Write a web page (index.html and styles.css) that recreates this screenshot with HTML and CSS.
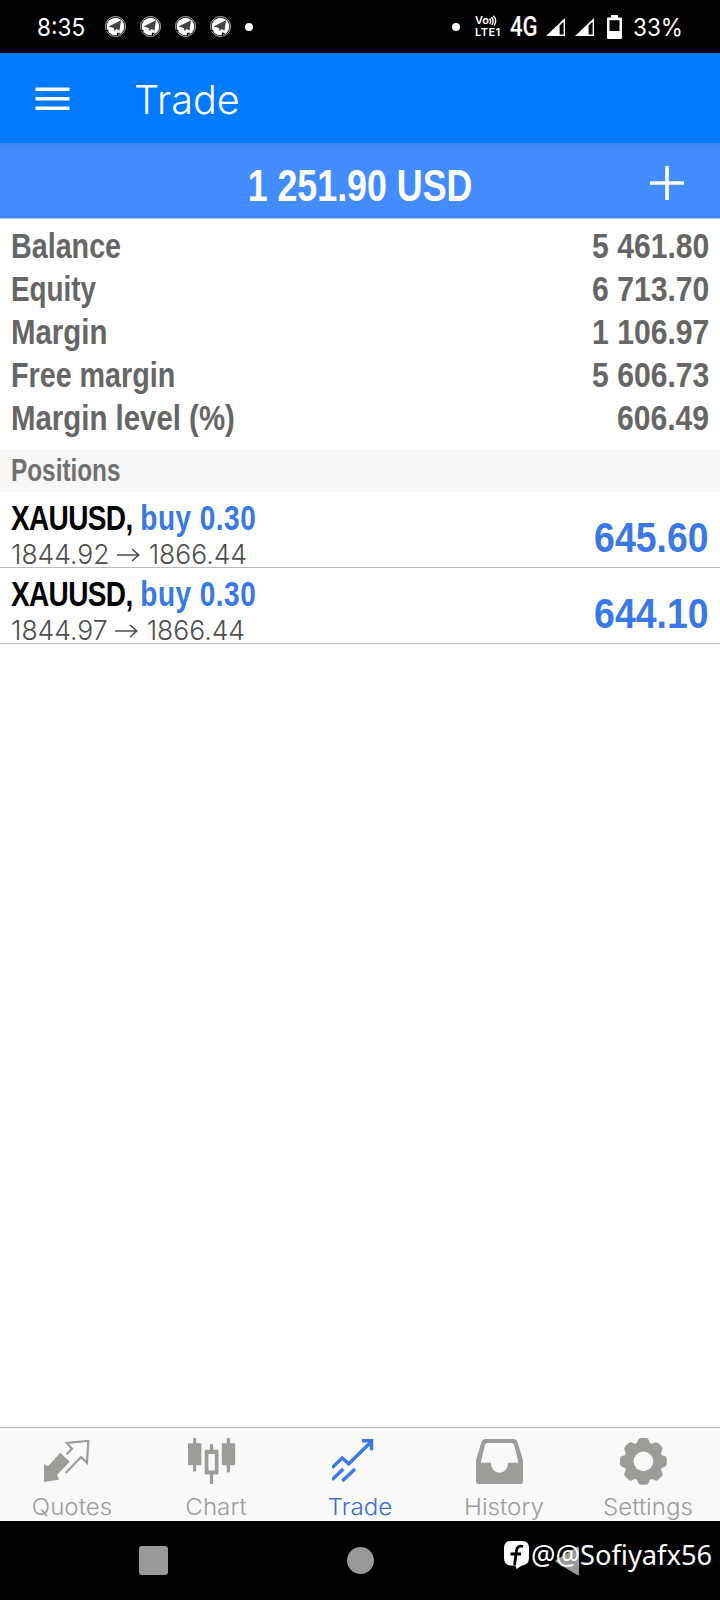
FILE: index.html
```html
<!DOCTYPE html>
<html lang="en">
  <head>
    <meta charset="UTF-8" />
    <meta name="viewport" content="width=device-width, initial-scale=1.0" />
    <title>Trade</title>
    <link rel="stylesheet" href="styles.css">
  </head>
  <body>
    <svg width="0" height="0" class="defs">
      <symbol id="telegram" viewBox="0 0 21 21">
        <circle cx="10.5" cy="10.5" r="10" fill="none" stroke="#bbb" stroke-width="1" />
        <circle cx="10.5" cy="10.5" r="8.8" fill="#fff" />
        <path d="M3.5 10.5 16 4.2 14.5 14.5 11.5 13 9.5 15 8.8 12z" fill="#444" />
        <path d="M1 14.2 3.5 15M12.5 20v-2.5h2" fill="none" stroke="#000" stroke-width="1.3" />
      </symbol>
      <symbol id="signal" viewBox="0 0 19 18">
        <path d="M0 18 19 0V18z" fill="#fff" />
        <path d="M13.6 7.6 17.6 3.8V16.4h-4z" fill="#000" />
      </symbol>
    </svg>

    <div class="status">
      <span class="clock">8:35</span>
      <div class="notifications">
        <svg width="21" height="21"><use href="#telegram" /></svg>
        <svg width="21" height="21"><use href="#telegram" /></svg>
        <svg width="21" height="21"><use href="#telegram" /></svg>
        <svg width="21" height="21"><use href="#telegram" /></svg>
        <i class="dot"></i>
      </div>
      <i class="dot dot-right"></i>
      <div class="volte">
        <div>Vo<svg width="8" height="11" viewBox="0 0 8 11" fill="none" stroke="#fff" stroke-width="1.4"><path d="M.5 3.5Q2.8 6 .8 9M2.5 2Q5.5 6 3 10M4.5.7Q8.5 5.5 5.2 10.5" /></svg></div>
        <div class="lte">LTE1</div>
      </div>
      <span class="network">4G</span>
      <svg class="signal" width="19" height="18"><use href="#signal" /></svg>
      <svg class="signal-2" width="19" height="18"><use href="#signal" /></svg>
      <svg class="battery" width="15" height="24" viewBox="0 0 15 24">
        <path d="M4 0h7v2.5h3q1 0 1 1V23q0 1-1 1H1q-1 0-1-1V3.5q0-1 1-1h3z" fill="#fff" />
        <path d="M2.5 5.2h10V16h-10z" fill="#000" />
      </svg>
      <span class="percent">33%</span>
    </div>

    <header class="header">
      <svg width="35" height="24" viewBox="0 0 35 24" fill="#fff">
        <path d="M.5.5h34v3.6H.5zM.5 10h34v3.6H.5zM.5 19.5h34v3.6H.5z" />
      </svg>
      <h1>Trade</h1>
    </header>

    <div class="profit">
      <span class="profit-value">1 251.90 USD</span>
      <svg class="plus" width="34" height="34" viewBox="0 0 34 34" stroke="#fff" stroke-width="3.6">
        <path d="M17 0v34M0 17h34" />
      </svg>
    </div>

    <div class="summary">
      <div class="line"><span>Balance</span><b>5 461.80</b></div>
      <div class="line"><span class="equity">Equity</span><b>6 713.70</b></div>
      <div class="line"><span class="margin">Margin</span><b>1 106.97</b></div>
      <div class="line"><span>Free margin</span><b>5 606.73</b></div>
      <div class="line"><span class="margin">Margin level (%)</span><b>606.49</b></div>
    </div>

    <h2 class="section"><span>Positions</span></h2>

    <div class="position">
      <div class="info">
        <div class="symbol"><span class="pair">XAUUSD,</span> <span class="side">buy 0.30</span></div>
        <div class="prices">1844.92 <svg width="24" height="14" viewBox="0 0 24 14"><path d="M0 7H22M15.5 1 22.3 7 15.5 13" /></svg> 1866.44</div>
      </div>
      <span class="gain">645.60</span>
    </div>
    <div class="position">
      <div class="info">
        <div class="symbol"><span class="pair">XAUUSD,</span> <span class="side">buy 0.30</span></div>
        <div class="prices">1844.97 <svg width="24" height="14" viewBox="0 0 24 14"><path d="M0 7H22M15.5 1 22.3 7 15.5 13" /></svg> 1866.44</div>
      </div>
      <span class="gain">644.10</span>
    </div>

    <nav class="tabs">
      <a class="tab">
        <svg width="48" height="48" viewBox="0 0 48 48">
          <path d="M0 26.3 4 28.3 16.3 14.7 25.7 23.7 13 37 15 41.7 0 44z" fill="#9c9c99" />
          <path d="M22.7 16.3 28 10.7 22.7 5 44.3 3 43 24.7 37 19 21.7 35" fill="none" stroke="#9c9c99" stroke-width="2.2" />
        </svg>
        <span>Quotes</span>
      </a>
      <a class="tab">
        <svg width="48" height="48" viewBox="0 0 48 48" fill="#9c9c99">
          <rect x="0" y="5.3" width="13.4" height="22" rx="1" />
          <rect x="5" y="0" width="3.2" height="33.5" rx="1" />
          <path d="M17.7 11.8h11.8q1 0 1 1v22.8q0 1-1 1h-4.3V46h-3.3v-9.4h-4.2q-1 0-1-1V12.8q0-1 1-1zM20.4 16v16.6h6.4V16z" fill-rule="evenodd" />
          <rect x="21.9" y="6" width="3.3" height="7" rx="1" />
          <rect x="33.8" y="5.3" width="13.4" height="22" rx="1" />
          <rect x="38.7" y="0" width="3.3" height="34.5" rx="1" />
        </svg>
        <span>Chart</span>
      </a>
      <a class="tab active">
        <svg width="48" height="48" viewBox="0 0 48 48" fill="none" stroke="#3a78e8" stroke-width="3.4">
          <path d="M0 29.8 10.3 20 16.7 25.8 39 4M30 2.7h9.5v9.5M0 41.8 11.3 31M10.3 43 23 31" />
        </svg>
        <span>Trade</span>
      </a>
      <a class="tab">
        <svg width="48" height="48" viewBox="0 0 48 48" fill="#9c9c99" fill-rule="evenodd">
          <path d="M9.5 1H37.5Q40.5 1 41.5 4L47 22V43.5Q47 46 44.5 46H2.5Q0 46 0 43.5V22L5.5 4Q6.5 1 9.5 1zM11 5Q9.5 5 9 6.5L4.7 24.7H15C15 38 32 38 32 24.7H42.5L38 6.5Q37.5 5 36 5z" />
        </svg>
        <span>History</span>
      </a>
      <a class="tab">
        <svg width="48" height="48" viewBox="0 0 48 48">
          <g fill="#9c9c99" transform="translate(23.4 23.4)">
            <circle r="18.8" />
            <path id="tooth" d="M-8-17Q-5.8-18.5-5.3-21.3-4.8-23.4-2.5-23.4H2.5Q4.8-23.4 5.3-21.3 5.8-18.5 8-17V17Q5.8 18.5 5.3 21.3 4.8 23.4 2.5 23.4H-2.5Q-4.8 23.4-5.3 21.3-5.8 18.5-8 17z" />
            <use href="#tooth" transform="rotate(45)" />
            <use href="#tooth" transform="rotate(90)" />
            <use href="#tooth" transform="rotate(135)" />
            <circle r="9.8" fill="#f9f9f9" />
          </g>
        </svg>
        <span>Settings</span>
      </a>
    </nav>

    <footer class="system">
      <i class="recent"></i>
      <i class="home"></i>
      <svg class="back" width="24" height="30" viewBox="0 0 24 30"><path d="M1 14Q-.5 15 1 16L22 29Q24 30 24 28V2Q24 0 22 1z" fill="#999" /></svg>
      <div class="watermark">
        <svg width="25" height="28" viewBox="0 0 25 28">
          <path d="M7 0H18Q25 0 25 7V17Q25 24 18 24.5L12.5 28 11.5 24.5H7Q0 24.5 0 17V7Q0 0 7 0z" fill="#fff" />
          <path d="M19 5.5Q13.5 4 12.5 9.5L10.5 24M6.5 13H17" fill="none" stroke="#000" stroke-width="2.8" />
        </svg>
        <span>@@Sofiyafx56</span>
      </div>
    </footer>
  </body>
</html>
```
FILE: styles.css
```css
* {
  box-sizing: border-box;
}

body {
  margin: 0;
  width: 720px;
  height: 1600px;
  display: flex;
  flex-direction: column;
  background: #fff;
  font-family: "Liberation Sans", Arial, sans-serif;
  overflow: hidden;
}

svg {
  display: block;
  flex: none;
}

.defs {
  position: absolute;
}

/* status bar */
.status {
  height: 53px;
  flex: none;
  background: #000;
  color: #fff;
  display: flex;
  align-items: center;
  padding: 0 0 0 37px;
  font-family: Inter, sans-serif;
}

.clock,
.percent {
  font-size: 24px;
  line-height: 30px;
  padding-top: 2px;
  white-space: nowrap;
  transform-origin: 0 50%;
}

.clock {
  width: 68px;
  transform: scaleX(0.94);
}

.notifications {
  display: flex;
  align-items: center;
  gap: 14px;
}

.dot {
  width: 8px;
  height: 8px;
  border-radius: 50%;
  background: #fff;
}

.dot-right {
  margin-left: 199px;
}

.volte {
  width: 26px;
  margin-left: 15px;
  font: 600 11px/11px Inter, sans-serif;
}

.volte div {
  display: flex;
  height: 12px;
  letter-spacing: -0.2px;
}

.volte .lte {
  letter-spacing: 0.5px;
}

.network {
  width: 36px;
  margin-left: 9px;
  font: 500 27px/30px Roboto, sans-serif;
  transform: scaleX(0.82);
  transform-origin: 0 50%;
}

.signal-2 {
  margin-left: 10px;
}

.battery {
  margin-left: 13px;
}

.percent {
  margin-left: 11px;
  transform: scaleX(0.94);
}

/* app header */
.header {
  height: 90px;
  flex: none;
  background: #007aff;
  color: #fff;
  display: flex;
  align-items: center;
  padding-left: 35px;
}

.header h1 {
  margin: 4px 0 0 64px;
  font: 350 40px/50px Inter, sans-serif;
  transform: scaleX(0.99);
  transform-origin: 0 50%;
}

.header svg {
  margin-top: 1px;
}

.profit {
  height: 76px;
  flex: none;
  background: linear-gradient(#3f86f0, #438cff 14px);
  border-bottom: 1px solid #a9c3ef;
  color: #fff;
  display: grid;
  grid-template-columns: 1fr 34px;
  align-items: center;
  padding: 4px 36px 0 70px;
}

.profit-value {
  font-size: 44px;
  font-weight: bold;
  line-height: 50px;
  padding-top: 6px;
  text-align: center;
  transform: scaleX(0.813);
}

/* account summary */
.summary {
  height: 230px;
  flex: none;
  padding: 5px 11px 0;
  color: #666;
}

.line {
  display: flex;
  justify-content: space-between;
  font-size: 35px;
  font-weight: bold;
  line-height: 43px;
}

.line span {
  transform: scaleX(0.82);
  transform-origin: 0 50%;
}

.line .equity {
  transform: scaleX(0.795);
}

.line .margin {
  transform: scaleX(0.84);
}

.line b {
  transform: scaleX(0.86);
  transform-origin: 100% 50%;
}

.section {
  height: 43px;
  flex: none;
  margin: 0;
  padding-left: 11px;
  background: #f7f7f7;
  color: #707070;
  font-size: 31px;
  line-height: 44px;
}

.section span {
  display: inline-block;
  transform: scaleX(0.785);
  transform-origin: 0 50%;
}

/* positions */
.position {
  height: 76px;
  flex: none;
  border-bottom: 1px solid #bdbdbd;
  display: flex;
  justify-content: space-between;
  padding: 6px 11px 0;
}

.symbol {
  font-size: 35px;
  font-weight: bold;
  line-height: 40px;
  white-space: nowrap;
  transform: scaleX(0.8);
  transform-origin: 0 50%;
}

.side,
.gain {
  color: #3a78e8;
}

.side {
  letter-spacing: 0.6px;
}

.pair {
  color: #000;
  letter-spacing: -0.8px;
}

.prices {
  display: flex;
  align-items: center;
  gap: 8px;
  padding-top: 1px;
  color: #4d4d4d;
  font: 300 27px/32px Inter, sans-serif;
  transform: scaleX(0.98);
  transform-origin: 0 50%;
}

.prices svg {
  fill: none;
  stroke: #4d4d4d;
  stroke-width: 1.6;
}

.gain {
  font-size: 43px;
  font-weight: bold;
  line-height: 50px;
  margin-top: 14px;
  transform: scaleX(0.87);
  transform-origin: 100% 50%;
}

/* bottom tabs */
.tabs {
  height: 94px;
  flex: none;
  margin-top: auto;
  border-top: 1px solid #b2b2b2;
  background: #f9f9f9;
  display: grid;
  grid-template-columns: repeat(5, 1fr);
}

.tab {
  display: flex;
  flex-direction: column;
  padding-top: 10px;
  color: #9c9c9c;
  font: 350 23px/28px Inter, sans-serif;
  text-align: center;
}

.tab svg {
  margin-left: 44px;
}

.tab span {
  padding-top: 7px;
  transform: scaleX(1.05);
}

.active {
  color: #3a70d0;
}

/* android buttons */
.system {
  height: 79px;
  flex: none;
  position: relative;
  background: #000;
  display: flex;
  align-items: center;
  padding-left: 139px;
}

.recent {
  width: 29px;
  height: 29px;
  border-radius: 3px;
  background: #999;
}

.home {
  width: 27px;
  height: 27px;
  margin-left: 179px;
  border-radius: 50%;
  background: #999;
}

.back {
  margin-left: 181px;
}

.watermark {
  position: absolute;
  left: 504px;
  top: 16px;
  display: flex;
  align-items: center;
  gap: 2px;
  color: #fff;
  font: 27px/36px "Noto Sans", sans-serif;
}

.watermark span {
  transform: scaleX(1.01);
  transform-origin: 0 50%;
}
```
